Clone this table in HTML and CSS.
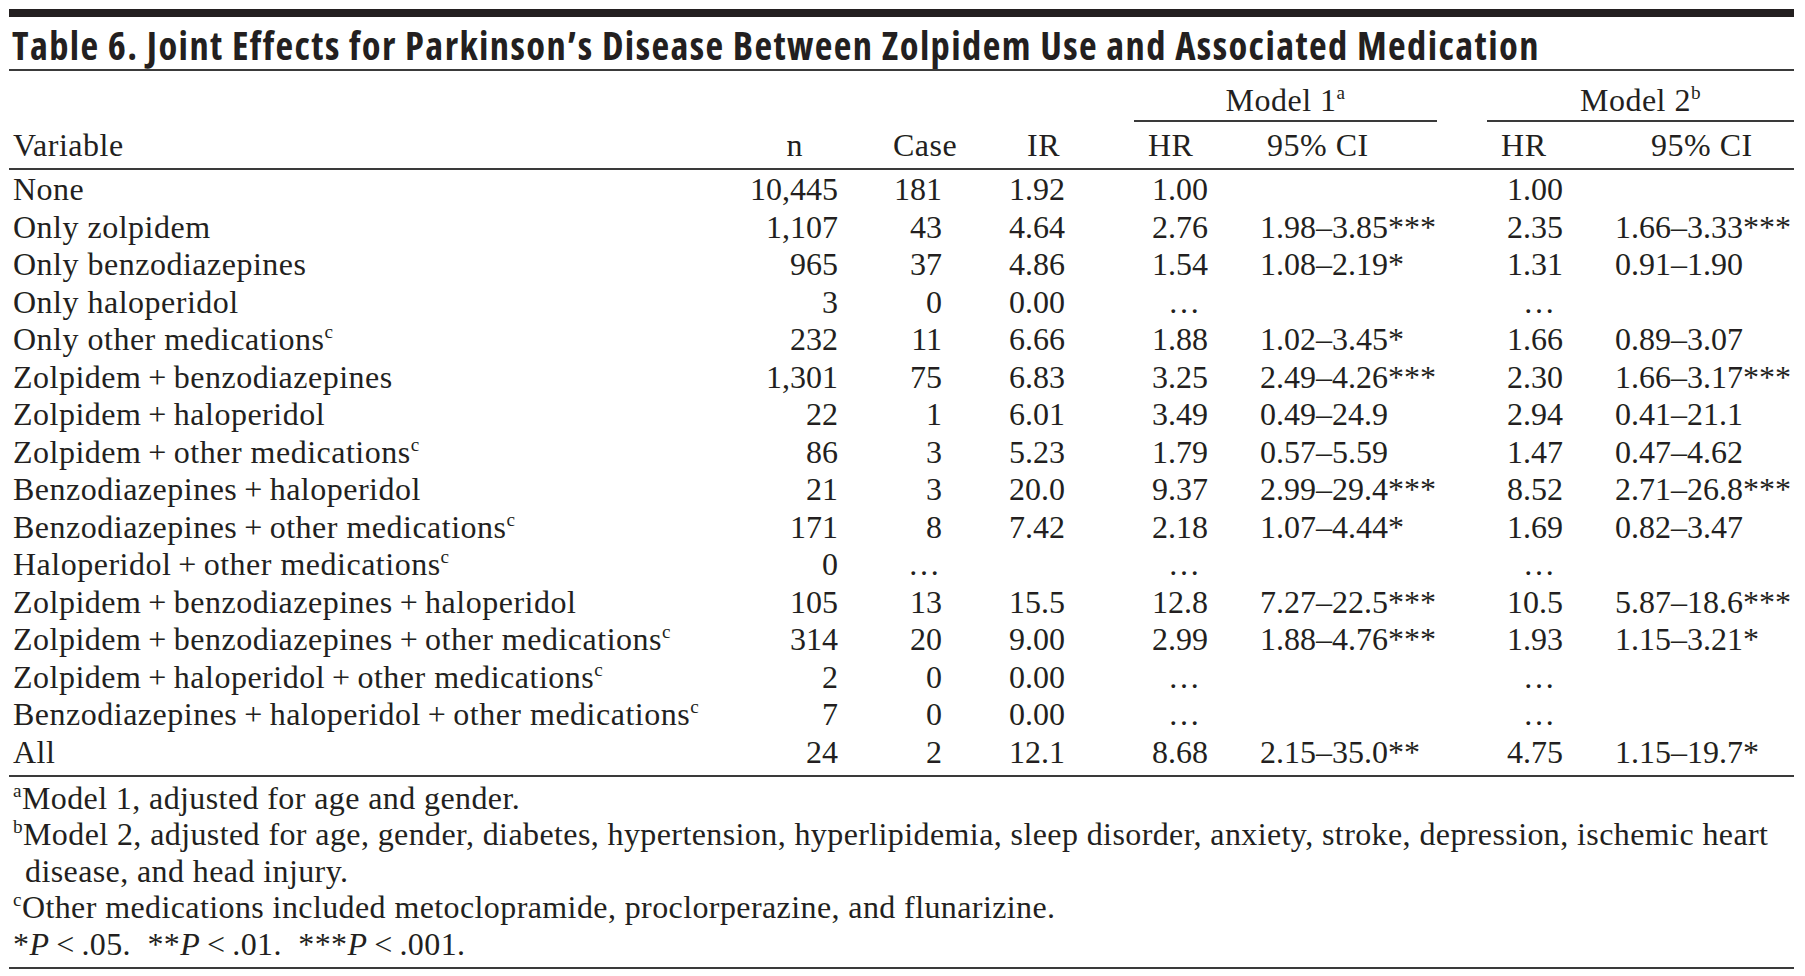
FILE: index.html
```html
<!DOCTYPE html>
<html lang="en">
<head>
<meta charset="utf-8">
<title>Table 6. Joint Effects for Parkinson’s Disease</title>
<link rel="stylesheet" href="styles.css">
</head>
<body>
<div class="sheet">
  <div class="topbar"></div>
  <h1 class="title">Table 6. Joint Effects for Parkinson’s Disease Between Zolpidem Use and Associated Medication</h1>
  <table class="data">
    <colgroup>
      <col class="c-var"><col class="c-n"><col class="c-case"><col class="c-ir"><col class="c-hr1"><col class="c-ci1"><col class="c-hr2"><col class="c-ci2">
    </colgroup>
    <thead>
      <tr class="model-row">
        <th></th><th></th><th></th><th></th>
        <th colspan="2" class="model"><div class="model-rule m1">Model 1<sup>a</sup></div></th>
        <th colspan="2" class="model"><div class="model-rule m2">Model 2<sup>b</sup></div></th>
      </tr>
      <tr class="head-row">
        <th class="h-var">Variable</th>
        <th class="h-n">n</th>
        <th class="h-case">Case</th>
        <th class="h-ir">IR</th>
        <th class="h-hr1">HR</th>
        <th class="h-ci1">95% CI</th>
        <th class="h-hr2">HR</th>
        <th class="h-ci2">95% CI</th>
      </tr>
    </thead>
    <tbody>
      <tr><td>None</td><td class="num">10,445</td><td class="num">181</td><td class="num">1.92</td><td class="num">1.00</td><td class="ci"></td><td class="num">1.00</td><td class="ci"></td></tr>
      <tr><td>Only zolpidem</td><td class="num">1,107</td><td class="num">43</td><td class="num">4.64</td><td class="num">2.76</td><td class="ci">1.98–3.85***</td><td class="num">2.35</td><td class="ci">1.66–3.33***</td></tr>
      <tr><td>Only benzodiazepines</td><td class="num">965</td><td class="num">37</td><td class="num">4.86</td><td class="num">1.54</td><td class="ci">1.08–2.19*</td><td class="num">1.31</td><td class="ci">0.91–1.90</td></tr>
      <tr><td>Only haloperidol</td><td class="num">3</td><td class="num">0</td><td class="num">0.00</td><td class="num dots">…</td><td class="ci"></td><td class="num dots">…</td><td class="ci"></td></tr>
      <tr><td>Only other medications<sup>c</sup></td><td class="num">232</td><td class="num">11</td><td class="num">6.66</td><td class="num">1.88</td><td class="ci">1.02–3.45*</td><td class="num">1.66</td><td class="ci">0.89–3.07</td></tr>
      <tr><td>Zolpidem&thinsp;+&thinsp;benzodiazepines</td><td class="num">1,301</td><td class="num">75</td><td class="num">6.83</td><td class="num">3.25</td><td class="ci">2.49–4.26***</td><td class="num">2.30</td><td class="ci">1.66–3.17***</td></tr>
      <tr><td>Zolpidem&thinsp;+&thinsp;haloperidol</td><td class="num">22</td><td class="num">1</td><td class="num">6.01</td><td class="num">3.49</td><td class="ci">0.49–24.9</td><td class="num">2.94</td><td class="ci">0.41–21.1</td></tr>
      <tr><td>Zolpidem&thinsp;+&thinsp;other medications<sup>c</sup></td><td class="num">86</td><td class="num">3</td><td class="num">5.23</td><td class="num">1.79</td><td class="ci">0.57–5.59</td><td class="num">1.47</td><td class="ci">0.47–4.62</td></tr>
      <tr><td>Benzodiazepines&thinsp;+&thinsp;haloperidol</td><td class="num">21</td><td class="num">3</td><td class="num">20.0</td><td class="num">9.37</td><td class="ci">2.99–29.4***</td><td class="num">8.52</td><td class="ci">2.71–26.8***</td></tr>
      <tr><td>Benzodiazepines&thinsp;+&thinsp;other medications<sup>c</sup></td><td class="num">171</td><td class="num">8</td><td class="num">7.42</td><td class="num">2.18</td><td class="ci">1.07–4.44*</td><td class="num">1.69</td><td class="ci">0.82–3.47</td></tr>
      <tr><td>Haloperidol&thinsp;+&thinsp;other medications<sup>c</sup></td><td class="num">0</td><td class="num dots-case">…</td><td class="num"></td><td class="num dots">…</td><td class="ci"></td><td class="num dots">…</td><td class="ci"></td></tr>
      <tr><td>Zolpidem&thinsp;+&thinsp;benzodiazepines&thinsp;+&thinsp;haloperidol</td><td class="num">105</td><td class="num">13</td><td class="num">15.5</td><td class="num">12.8</td><td class="ci">7.27–22.5***</td><td class="num">10.5</td><td class="ci">5.87–18.6***</td></tr>
      <tr><td>Zolpidem&thinsp;+&thinsp;benzodiazepines&thinsp;+&thinsp;other medications<sup>c</sup></td><td class="num">314</td><td class="num">20</td><td class="num">9.00</td><td class="num">2.99</td><td class="ci">1.88–4.76***</td><td class="num">1.93</td><td class="ci">1.15–3.21*</td></tr>
      <tr><td>Zolpidem&thinsp;+&thinsp;haloperidol&thinsp;+&thinsp;other medications<sup>c</sup></td><td class="num">2</td><td class="num">0</td><td class="num">0.00</td><td class="num dots">…</td><td class="ci"></td><td class="num dots">…</td><td class="ci"></td></tr>
      <tr><td>Benzodiazepines&thinsp;+&thinsp;haloperidol&thinsp;+&thinsp;other medications<sup>c</sup></td><td class="num">7</td><td class="num">0</td><td class="num">0.00</td><td class="num dots">…</td><td class="ci"></td><td class="num dots">…</td><td class="ci"></td></tr>
      <tr class="last"><td>All</td><td class="num">24</td><td class="num">2</td><td class="num">12.1</td><td class="num">8.68</td><td class="ci">2.15–35.0**</td><td class="num">4.75</td><td class="ci">1.15–19.7*</td></tr>
    </tbody>
  </table>
  <div class="notes">
    <p class="note"><sup>a</sup>Model 1, adjusted for age and gender.</p>
    <p class="note"><sup>b</sup>Model 2, adjusted for age, gender, diabetes, hypertension, hyperlipidemia, sleep disorder, anxiety, stroke, depression, ischemic heart<br>disease, and head injury.</p>
    <p class="note"><sup>c</sup>Other medications included metoclopramide, proclorperazine, and flunarizine.</p>
    <p class="note">*<i>P</i>&thinsp;&lt;&thinsp;.05.&ensp;**<i>P</i>&thinsp;&lt;&thinsp;.01.&ensp;***<i>P</i>&thinsp;&lt;&thinsp;.001.</p>
  </div>
</div>
</body>
</html>
```

FILE: styles.css
```css
html, body {
  margin: 0;
  padding: 0;
  background: #ffffff;
}

body {
  color: #231f20;
  font-family: "Liberation Serif", "Times New Roman", serif;
}

.sheet {
  margin-left: 9px;
  width: 1785px;
  padding-top: 9px;
}

.topbar {
  height: 8px;
  background: #231f20;
}

.title {
  margin: 0;
  padding: 4px 0 0 3px;
  font-family: "Open Sans", "DejaVu Sans Condensed", sans-serif;
  font-stretch: 75%;
  font-weight: 700;
  font-size: 38.5px;
  letter-spacing: 1.4px;
  line-height: 48px;
  white-space: nowrap;
  border-bottom: 2px solid #3a3a3a;
}

.data {
  width: 1785px;
  table-layout: fixed;
  border-collapse: collapse;
  font-size: 32px;
  letter-spacing: 0.5px;
}

.c-var { width: 740px; }
.c-n { width: 89px; }
.c-case { width: 104px; }
.c-ir { width: 123px; }
.c-hr1 { width: 143px; }
.c-ci1 { width: 260px; }
.c-hr2 { width: 95px; }
.c-ci2 { width: 231px; }

.data th,
.data td {
  padding: 0;
  font-weight: 400;
  white-space: nowrap;
}

.data sup {
  font-size: 60%;
  line-height: 0;
  vertical-align: 0.6em;
}

.model-row th {
  padding-top: 9px;
  line-height: 40px;
  vertical-align: bottom;
}

.model-rule {
  text-align: center;
  border-bottom: 2px solid #3a3a3a;
}

.model-rule.m1 { margin: 0 31px 0 69px; }
.model-rule.m2 { margin: 0 0 0 19px; }

.head-row {
  border-bottom: 2px solid #3a3a3a;
}

.head-row th {
  line-height: 46px;
  text-align: left;
}

.data .head-row .h-var { padding-left: 4px; }
.data .head-row .h-n { text-align: right; padding-right: 35px; }
.data .head-row .h-case { padding-left: 55px; }
.data .head-row .h-ir { text-align: right; padding-right: 5px; }
.data .head-row .h-hr1 { padding-left: 83px; }
.data .head-row .h-ci1 { padding-left: 59px; }
.data .head-row .h-hr2 { padding-left: 33px; }
.data .head-row .h-ci2 { padding-left: 88px; }

.data tbody td {
  line-height: 37.5px;
}

.data tbody td:first-child {
  padding-left: 4px;
}

.data tbody tr:first-child td {
  padding-top: 1px;
}

.data tbody tr.last {
  border-bottom: 2px solid #3a3a3a;
}

.data tbody tr.last td {
  padding-bottom: 4px;
}

.data .num {
  text-align: right;
  letter-spacing: 0;
}

.data .num.dots { padding-right: 8px; }
.data .num.dots-case { padding-right: 2px; }

.data .ci {
  padding-left: 52px;
  text-align: left;
  letter-spacing: 0;
}

.notes {
  padding: 3px 0 5px 4px;
  border-bottom: 2px solid #3a3a3a;
  font-size: 32px;
  letter-spacing: 0.4px;
  line-height: 36.4px;
}

.note {
  margin: 0;
  padding-left: 12px;
  text-indent: -12px;
  white-space: nowrap;
}

.note sup {
  font-size: 60%;
  line-height: 0;
  vertical-align: 0.6em;
}
```
